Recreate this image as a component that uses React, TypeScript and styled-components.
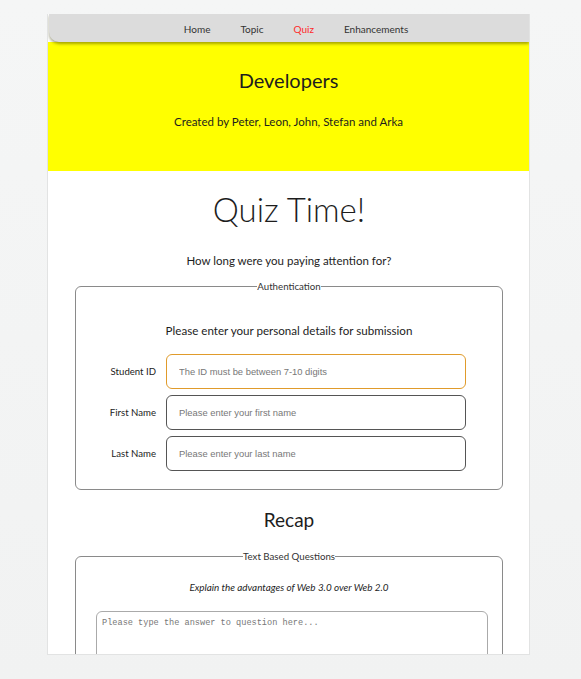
import React from "react";
import styled, { createGlobalStyle } from "styled-components";

const Global = createGlobalStyle`
  html, body { margin: 0; padding: 0; }
  body {
    background: linear-gradient(#f5f6f6, #f1f2f2);
    min-height: 679px;
    font-family: Lato, "Noto Sans", sans-serif;
    color: #1d1d1d;
  }
`;

const Page = styled.div`
  padding: 14px 0 0 47px;
`;

const Card = styled.div`
  width: 481px;
  height: 640px;
  background: #fff;
  border: 1px solid #e2e3e3;
  border-top: none;
  overflow: hidden;
  box-sizing: content-box;
`;

const Nav = styled.nav`
  height: 28px;
  margin-left: 1px;
  background: #dcdcdc;
  border-bottom-left-radius: 10px;
  box-shadow: 0 2px 3px rgba(60, 60, 0, 0.45);
  display: flex;
  align-items: center;
  justify-content: center;
  gap: 30px;
  padding-left: 14px;
  padding-top: 2px;
  box-sizing: border-box;
  position: relative;
  z-index: 1;
`;

const NavLink = styled.a<{ $active?: boolean }>`
  font-size: 10px;
  color: ${(p) => (p.$active ? "#ff2a2a" : "#333")};
  text-decoration: none;
`;

const Header = styled.header`
  background: #ffff00;
  height: 129px;
  display: flex;
  flex-direction: column;
  align-items: center;
  padding-top: 24px;
  box-sizing: border-box;
`;

const HeaderTitle = styled.h1`
  margin: 0;
  font-size: 20px;
  font-weight: 400;
  line-height: 28px;
`;

const HeaderSub = styled.p`
  margin: 20px 0 0;
  font-size: 11.5px;
  line-height: 15px;
`;

const Main = styled.main`
  padding: 16px 26px 0 27px;
  display: flex;
  flex-direction: column;
  align-items: stretch;
`;

const Title = styled.h2`
  margin: 0;
  text-align: center;
  font-size: 33px;
  font-weight: 300;
  line-height: 44px;
`;

const Prompt = styled.p`
  margin: 22px 0 0;
  text-align: center;
  font-size: 11.5px;
  line-height: 16px;
`;

const Fieldset = styled.fieldset<{ $mt: number }>`
  margin: ${(p) => p.$mt}px 0 0;
  padding: 0;
  border: 1px solid #8a8a8a;
  border-radius: 6px;
  min-width: 0;
`;

const Legend = styled.legend`
  margin: 0 auto;
  padding: 0;
  font-size: 9.7px;
  line-height: 13px;
  color: #333;
`;

const Intro = styled.p`
  margin: 30px 0 15px;
  text-align: center;
  font-size: 11.6px;
  line-height: 16px;
`;

const FormGrid = styled.div`
  display: grid;
  grid-template-columns: 80px 300px;
  column-gap: 10px;
  row-gap: 6px;
  align-items: center;
  padding-bottom: 18px;
`;

const Label = styled.label`
  text-align: right;
  font-size: 9.6px;
  color: #222;
`;

const Input = styled.input<{ $focus?: boolean }>`
  height: 35px;
  box-sizing: border-box;
  border: 1px solid ${(p) => (p.$focus ? "#e09b2b" : "#555")};
  border-radius: 6px;
  padding: 0 12px 1px;
  font-family: "Liberation Sans", Arial, sans-serif;
  font-size: 9.4px;
  outline: none;
  &::placeholder { color: #777; }
`;

const Section = styled.h3`
  margin: 17px 0 0;
  text-align: center;
  font-size: 19px;
  font-weight: 400;
  line-height: 26px;
`;

const Question = styled.p`
  margin: 17px 0 17px;
  text-align: center;
  font-size: 9.9px;
  font-style: italic;
  line-height: 14px;
`;

const TextArea = styled.textarea`
  display: block;
  margin: 0 0 0 20px;
  width: 392px;
  height: 80px;
  box-sizing: border-box;
  border: 1px solid #aaa;
  border-radius: 6px;
  padding: 6px 5px;
  font-family: "Liberation Mono", "DejaVu Sans Mono", monospace;
  font-size: 8.6px;
  resize: none;
  outline: none;
  &::placeholder { color: #777; }
`;

export default function App() {
  return (
    <Page>
      <Global />
      <Card>
        <Nav>
          <NavLink>Home</NavLink>
          <NavLink>Topic</NavLink>
          <NavLink $active>Quiz</NavLink>
          <NavLink>Enhancements</NavLink>
        </Nav>
        <Header>
          <HeaderTitle>Developers</HeaderTitle>
          <HeaderSub>Created by Peter, Leon, John, Stefan and Arka</HeaderSub>
        </Header>
        <Main>
          <Title>Quiz Time!</Title>
          <Prompt>How long were you paying attention for?</Prompt>
          <Fieldset $mt={11}>
            <Legend>Authentication</Legend>
            <Intro>Please enter your personal details for submission</Intro>
            <FormGrid>
              <Label htmlFor="sid">Student ID</Label>
              <Input id="sid" $focus placeholder="The ID must be between 7-10 digits" />
              <Label htmlFor="fn">First Name</Label>
              <Input id="fn" placeholder="Please enter your first name" />
              <Label htmlFor="ln">Last Name</Label>
              <Input id="ln" placeholder="Please enter your last name" />
            </FormGrid>
          </Fieldset>
          <Section>Recap</Section>
          <Fieldset $mt={17}>
            <Legend>Text Based Questions</Legend>
            <Question>Explain the advantages of Web 3.0 over Web 2.0</Question>
            <TextArea placeholder="Please type the answer to question here..." />
          </Fieldset>
        </Main>
      </Card>
    </Page>
  );
}
